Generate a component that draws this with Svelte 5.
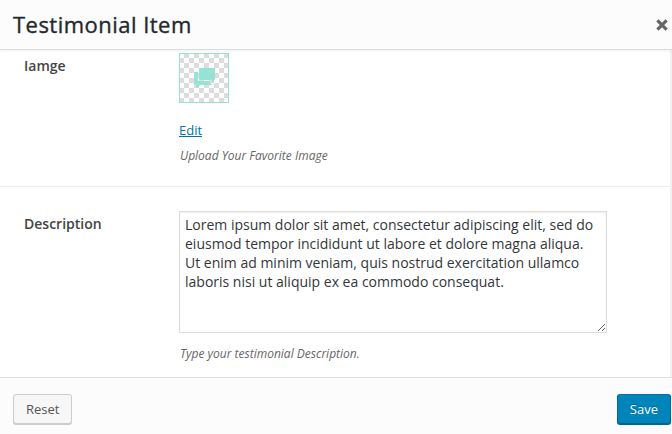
<script>
  let description = $state(
    'Lorem ipsum dolor sit amet, consectetur adipiscing elit, sed do eiusmod tempor incididunt ut labore et dolore magna aliqua. Ut enim ad minim veniam, quis nostrud exercitation ullamco laboris nisi ut aliquip ex ea commodo consequat.'
  );
</script>

<div class="dialog">
  <header>
    <h1>Testimonial Item</h1>
    <button class="close" aria-label="Close">
      <svg width="12" height="12" viewBox="0 0 12 12"><path d="M1.4 1.4 10.6 10.6M10.6 1.4 1.4 10.6" /></svg>
    </button>
  </header>

  <main>
    <section class="row image-row">
      <div class="label">Iamge</div>
      <div class="field">
        <div class="thumb">
          <svg width="48" height="48" viewBox="0 0 48 48">
            <path d="M20 14H34Q35 14 35 15V25Q35 26 34 26V29L31 26H20Q19 26 19 25V15Q19 14 20 14Z" />
            <path d="M18 18H15Q14 18 14 19V30Q14 31 16 31V34.5L20 31H32L29 27H19Q18 27 18 26Z" />
          </svg>
        </div>
        <a href="#edit">Edit</a>
        <p class="hint">Upload Your Favorite Image</p>
      </div>
    </section>

    <section class="row description-row">
      <label class="label" for="description">Description</label>
      <div class="field">
        <textarea id="description" bind:value={description} spellcheck="false"></textarea>
        <p class="hint">Type your testimonial Description.</p>
      </div>
    </section>
  </main>

  <footer>
    <button class="btn">Reset</button>
    <button class="btn primary">Save</button>
  </footer>
</div>

<style>
  :global(body) {
    margin: 0;
    overflow: hidden;
  }
  .dialog {
    box-sizing: border-box;
    width: 672px;
    height: 434px;
    display: flex;
    flex-direction: column;
    overflow: hidden;
    background: #fff;
    color: #444;
    font: 13px/19px 'Open Sans', sans-serif;
  }
  header {
    box-sizing: border-box;
    flex: 0 0 50px;
    display: flex;
    align-items: center;
    justify-content: space-between;
    padding: 0 4px 0 13px;
    background: #fcfcfc;
    border-bottom: 1px solid #ddd;
    box-shadow: 0 1px 2px rgba(0, 0, 0, 0.06);
    z-index: 1;
  }
  h1 {
    margin: 0 0 2px;
    color: #23282d;
    font-size: 22px;
    font-weight: 400;
    letter-spacing: 0.47px;
    line-height: 46px;
    -webkit-text-stroke: 0.35px #23282d;
  }
  .close {
    display: flex;
    padding: 0;
    border: 0;
    background: none;
  }
  .close path {
    fill: none;
    stroke: #666;
    stroke-width: 3.2;
  }
  main {
    box-sizing: border-box;
    flex: 0 0 327px;
    overflow: hidden;
    border-right: 2px solid #f1f1f1;
  }
  .row {
    box-sizing: border-box;
    display: flex;
    padding-left: 24px;
  }
  .image-row {
    height: 137px;
    padding-top: 3px;
    border-bottom: 1px solid #eee;
  }
  .description-row {
    padding-top: 24px;
  }
  .label {
    width: 155px;
    padding-top: 4px;
    font-size: 14px;
    font-weight: 600;
    line-height: 18px;
  }
  .field {
    display: flex;
    flex-direction: column;
    align-items: flex-start;
  }
  .thumb {
    width: 48px;
    height: 48px;
    border: 1px solid #96e2d4;
    background: repeating-conic-gradient(#ddd 0 25%, #fff 0 50%) -1px -1px / 10px 10px;
  }
  .thumb svg {
    display: block;
    fill: #96e2d4;
  }
  a {
    margin-top: 18px;
    color: #0073aa;
  }
  .hint {
    margin: 7px 0 0 1px;
    color: #666;
    font-size: 12px;
    font-style: italic;
    line-height: 18px;
  }
  textarea {
    box-sizing: border-box;
    display: block;
    width: 428px;
    height: 122px;
    margin: 0;
    padding: 3px 5px;
    border: 1px solid #ddd;
    outline: 0;
    box-shadow: inset 0 1px 2px rgba(0, 0, 0, 0.07);
    color: #32373c;
    font: 14px/19px 'Open Sans', sans-serif;
    resize: both;
    overflow: auto;
  }
  .description-row .hint {
    margin-top: 12px;
  }
  footer {
    box-sizing: border-box;
    flex: 1;
    display: flex;
    align-items: flex-start;
    justify-content: space-between;
    padding: 16px 1px 0 13px;
    background: #fcfcfc;
    border-top: 1px solid #ddd;
  }
  .btn {
    box-sizing: border-box;
    height: 30px;
    padding: 0 12px;
    border: 1px solid #ccc;
    border-radius: 3px;
    background: #f7f7f7;
    box-shadow: 0 1px 0 #ccc;
    color: #555;
    font: 13px/28px 'Open Sans', sans-serif;
  }
  .primary {
    border-color: #0073aa #006799 #006799;
    background: #0085ba;
    box-shadow: 0 1px 0 #006799;
    color: #fff;
    text-shadow: 0 -1px 1px #006799;
  }
</style>
